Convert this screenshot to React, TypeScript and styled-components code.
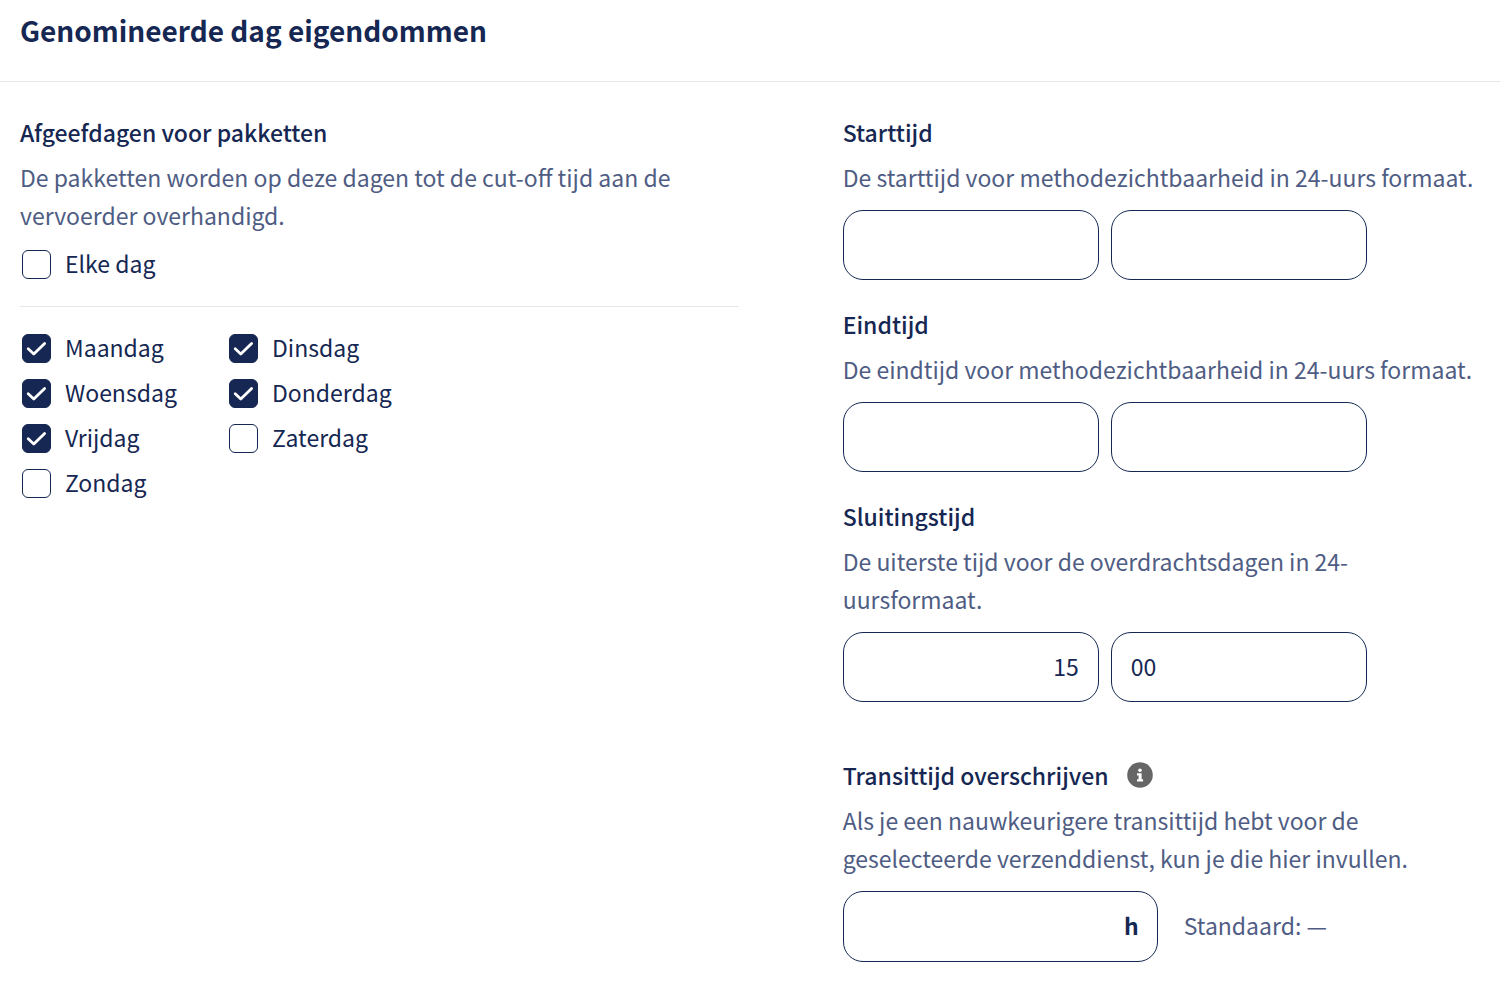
import React, { useState } from "react";
import styled, { createGlobalStyle } from "styled-components";

const navy = "#152752";
const slate = "#4f5d84";
const rule = "#e5e7ea";

const GlobalStyle = createGlobalStyle`
  *, *::before, *::after { box-sizing: border-box; }
  body {
    margin: 0;
    background: #fff;
    color: ${navy};
    font-family: "Source Sans Pro", "Noto Sans CJK JP", sans-serif;
    font-size: 23px;
    line-height: 38px;
  }
`;

const Header = styled.header`
  padding: 10px 20px 31px;
  border-bottom: 1px solid ${rule};
`;

const Title = styled.h1`
  margin: 0;
  font-size: 28px;
  line-height: 40px;
  font-weight: 700;
`;

const Columns = styled.main`
  display: grid;
  grid-template-columns: 53fr 47fr;
  column-gap: 104px;
  padding: 31px 20px 20px;
`;

const FieldSet = styled.fieldset<{ $gap?: number }>`
  min-width: 0;
  margin: 0 0 ${(p) => p.$gap ?? 0}px;
  padding: 0;
  border: 0;
`;

const Legend = styled.legend`
  display: flex;
  align-items: center;
  gap: 18px;
  margin-bottom: 7px;
  padding: 0;
  font-weight: 500;
`;

const Description = styled.p`
  margin: 0;
  color: ${slate};
`;

const EveryDay = styled.div`
  padding: 8px 0 19px;
  border-bottom: 1px solid ${rule};
`;

const Days = styled.div`
  display: grid;
  grid-template-columns: repeat(2, 207px);
  padding-top: 19px;
`;

const CheckLabel = styled.label`
  display: flex;
  align-items: center;
  gap: 14px;
  height: 45px;
  padding-left: 2px;
`;

const CheckText = styled.span`
  padding-bottom: 4px;
`;

const CheckFrame = styled.span`
  display: grid;
  width: 29px;
  height: 29px;

  > * {
    grid-area: 1 / 1;
  }
`;

const CheckInput = styled.input`
  appearance: none;
  width: 29px;
  height: 29px;
  margin: 0;
  border: 1px solid ${navy};
  border-radius: 6px;
  background: #fff;

  &:checked {
    background: ${navy};
  }
`;

const CheckMark = styled.svg`
  width: 29px;
  height: 29px;
  fill: none;
  stroke: #fff;
  stroke-width: 2.8;
  stroke-linecap: round;
  stroke-linejoin: round;
  pointer-events: none;
`;

const InputRow = styled.div<{ $gap: number }>`
  display: flex;
  align-items: center;
  gap: ${(p) => p.$gap}px;
  margin-top: 14px;
`;

const TimeInput = styled.input<{ $align: "left" | "right" }>`
  width: 256px;
  height: 70px;
  padding: 0 19px 2px;
  border: 1px solid ${navy};
  border-radius: 20px;
  background: #fff;
  color: inherit;
  font: inherit;
  text-align: ${(p) => p.$align};
`;

const HoursBox = styled.label`
  display: flex;
  align-items: center;
  width: 315px;
  height: 71px;
  padding: 0 18px 4px;
  border: 1px solid ${navy};
  border-radius: 20px;
  font-weight: 700;
`;

const HoursInput = styled.input`
  flex: 1;
  min-width: 0;
  padding: 0;
  border: 0;
  outline: 0;
  background: transparent;
  color: inherit;
  font: inherit;
  text-align: right;
`;

const Standard = styled.span`
  padding-bottom: 4px;
  color: ${slate};
`;

const InfoButton = styled.button`
  display: flex;
  padding: 0;
  border: 0;
  background: none;
`;

function Check({ label, initial = false }: { label: string; initial?: boolean }) {
  const [checked, setChecked] = useState(initial);
  return (
    <CheckLabel>
      <CheckFrame>
        <CheckInput type="checkbox" checked={checked} onChange={(e) => setChecked(e.target.checked)} />
        {checked && (
          <CheckMark viewBox="0 0 29 29" aria-hidden="true">
            <path d="M6.2 14.8 11.8 20 22.6 9.4" />
          </CheckMark>
        )}
      </CheckFrame>
      <CheckText>{label}</CheckText>
    </CheckLabel>
  );
}

interface TimeFieldProps {
  title: string;
  description: string;
  hours?: string;
  minutes?: string;
  gap: number;
}

function TimeField({ title, description, hours = "", minutes = "", gap }: TimeFieldProps) {
  return (
    <FieldSet $gap={gap}>
      <Legend>{title}</Legend>
      <Description>{description}</Description>
      <InputRow $gap={12}>
        <TimeInput $align="right" aria-label={`${title} uren`} defaultValue={hours} />
        <TimeInput $align="left" aria-label={`${title} minuten`} defaultValue={minutes} />
      </InputRow>
    </FieldSet>
  );
}

const days = [
  { label: "Maandag", on: true },
  { label: "Dinsdag", on: true },
  { label: "Woensdag", on: true },
  { label: "Donderdag", on: true },
  { label: "Vrijdag", on: true },
  { label: "Zaterdag", on: false },
  { label: "Zondag", on: false },
];

export default function App() {
  return (
    <>
      <GlobalStyle />
      <Header>
        <Title>Genomineerde dag eigendommen</Title>
      </Header>
      <Columns>
        <FieldSet>
          <Legend>Afgeefdagen voor pakketten</Legend>
          <Description>
            De pakketten worden op deze dagen tot de cut-off tijd aan de vervoerder overhandigd.
          </Description>
          <EveryDay>
            <Check label="Elke dag" />
          </EveryDay>
          <Days>
            {days.map((d) => (
              <Check key={d.label} label={d.label} initial={d.on} />
            ))}
          </Days>
        </FieldSet>
        <div>
          <TimeField
            title="Starttijd"
            description="De starttijd voor methodezichtbaarheid in 24-uurs formaat."
            gap={25}
          />
          <TimeField
            title="Eindtijd"
            description="De eindtijd voor methodezichtbaarheid in 24-uurs formaat."
            gap={25}
          />
          <TimeField
            title="Sluitingstijd"
            description="De uiterste tijd voor de overdrachtsdagen in 24-uursformaat."
            hours="15"
            minutes="00"
            gap={54}
          />
          <FieldSet>
            <Legend>
              Transittijd overschrijven
              <InfoButton type="button" aria-label="Meer informatie">
                <svg width="26" height="26" viewBox="0 0 26 26" aria-hidden="true">
                  <circle cx="13" cy="13" r="12.8" fill="#666" />
                  <circle cx="13" cy="8.3" r="1.8" fill="#fff" />
                  <path d="M10 11.2h4.6v6h1.5v2.2H10v-2.2h1.6v-3.8H10z" fill="#fff" />
                </svg>
              </InfoButton>
            </Legend>
            <Description>
              Als je een nauwkeurigere transittijd hebt voor de geselecteerde verzenddienst, kun je die hier
              invullen.
            </Description>
            <InputRow $gap={26}>
              <HoursBox>
                <HoursInput aria-label="Transittijd in uren" />h
              </HoursBox>
              <Standard>Standaard: —</Standard>
            </InputRow>
          </FieldSet>
        </div>
      </Columns>
    </>
  );
}
